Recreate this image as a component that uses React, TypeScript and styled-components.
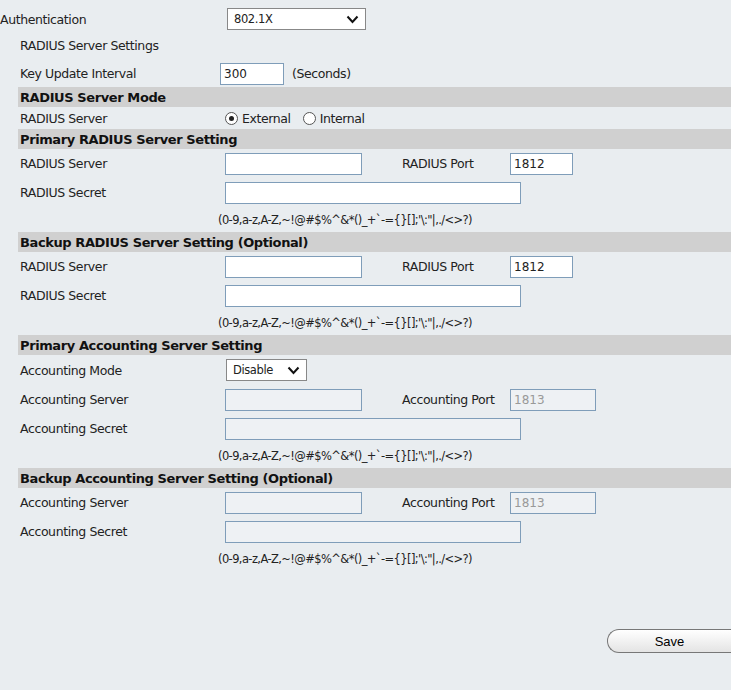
import React from 'react';
import styled, {createGlobalStyle} from 'styled-components';

const Global = createGlobalStyle`
  body { margin: 0; background: #fff; font-family: 'DejaVu Sans', Verdana, sans-serif; }
`;

const HINT = `(0-9,a-z,A-Z,~!@#$%^&*()_+\`-={}[];'\\:"|,./<>?)`;

const Page = styled.div`
  width: 731px;
  height: 690px;
  background: #e9edf0;
  font-size: 12.5px;
  color: #222;
  padding-top: 8px;
  box-sizing: border-box;
  letter-spacing: -0.4px;
`;

const Row = styled.div<{$h?: number; $indent?: number}>`
  display: flex;
  align-items: center;
  height: ${p => p.$h ?? 28}px;
  padding-left: ${p => p.$indent ?? 20}px;
`;

const Label = styled.div<{$w?: number}>`
  width: ${p => p.$w ?? 205}px;
  flex: none;
`;

const Header = styled.div`
  margin-left: 18px;
  height: 20px;
  background: #d0d0d0;
  font-weight: bold;
  font-size: 13px;
  padding-left: 2px;
  display: flex;
  align-items: center;
  color: #111;
`;

const Input = styled.input<{$w: number}>`
  width: ${p => p.$w}px;
  height: 22px;
  box-sizing: border-box;
  border: 1px solid #7f9db9;
  background: ${p => (p.disabled ? '#eef1f4' : '#fff')};
  color: #999;
  font: inherit;
  font-size: 12px;
  padding: 0 3px;
  &:not(:disabled) { color: #222; }
`;

const Select = styled.div<{$w: number}>`
  width: ${p => p.$w}px;
  height: 22px;
  box-sizing: border-box;
  border: 1px solid #888;
  background: #fff;
  display: flex;
  align-items: center;
  justify-content: space-between;
  padding: 0 6px;
  font-size: 11.5px;
`;

const PortLabel = styled.div`
  width: 148px;
  box-sizing: border-box;
  padding-left: 40px;
  flex: none;
`;

const Hint = styled.div`
  padding-left: 218px;
  height: 25px;
  display: flex;
  align-items: center;
  font-size: 11.5px;
  letter-spacing: -0.6px;
`;

const Radio = styled.span<{$on?: boolean}>`
  width: 11px;
  height: 11px;
  border: 1px solid #555;
  border-radius: 50%;
  display: inline-flex;
  align-items: center;
  justify-content: center;
  margin-right: 4px;
  background: #fff;
  &::after { content: ''; width: 5px; height: 5px; border-radius: 50%; background: ${p => (p.$on ? '#222' : 'transparent')}; }
`;

const Gap = styled.span`
  width: 12px;
`;

const Footer = styled.div`
  display: flex;
  justify-content: flex-end;
  padding-top: 58px;
`;

const SaveBtn = styled.button`
  width: 124px;
  height: 24px;
  border: 1px solid #777;
  border-right: none;
  border-radius: 12px 0 0 12px;
  background: linear-gradient(#fff, #e4e4e4);
  font-family: 'Liberation Sans', Arial, sans-serif;
  font-size: 13px;
`;

const Chevron = () => (
  <svg width="13" height="9" viewBox="0 0 13 9">
    <path d="M1.5 1.5 L6.5 7 L11.5 1.5" stroke="#111" strokeWidth="2" fill="none" />
  </svg>
);

const Server = ({name, port, portLbl, dis}: {name: string; port: string; portLbl: string; dis?: boolean}) => (
  <>
    <Row $h={29}>
      <Label>{name} Server</Label>
      <Input $w={137} disabled={dis} />
      <PortLabel>{portLbl}</PortLabel>
      <Input $w={dis ? 86 : 63} defaultValue={port} disabled={dis} />
    </Row>
    <Row $h={29}>
      <Label>{name} Secret</Label>
      <Input $w={296} disabled={dis} />
    </Row>
    <Hint>{HINT}</Hint>
  </>
);

export default function App() {
  return (
    <Page>
      <Global />
      <Row $h={22} $indent={0}>
        <Label $w={227}>Authentication</Label>
        <Select $w={139}>802.1X<Chevron /></Select>
      </Row>
      <Row $h={30}>RADIUS Server Settings</Row>
      <Row $h={27}>
        <Label $w={200}>Key Update Interval</Label>
        <Input $w={64} defaultValue="300" />
        <span style={{marginLeft: 8}}>(Seconds)</span>
      </Row>
      <Header>RADIUS Server Mode</Header>
      <Row $h={22}>
        <Label>RADIUS Server</Label>
        <Radio $on />External<Gap /><Radio />Internal
      </Row>
      <Header>Primary RADIUS Server Setting</Header>
      <Server name="RADIUS" port="1812" portLbl="RADIUS Port" />
      <Header>Backup RADIUS Server Setting (Optional)</Header>
      <Server name="RADIUS" port="1812" portLbl="RADIUS Port" />
      <Header>Primary Accounting Server Setting</Header>
      <Row $h={30}>
        <Label $w={206}>Accounting Mode</Label>
        <Select $w={81}>Disable<Chevron /></Select>
      </Row>
      <Server name="Accounting" port="1813" portLbl="Accounting Port" dis />
      <Header>Backup Accounting Server Setting (Optional)</Header>
      <Server name="Accounting" port="1813" portLbl="Accounting Port" dis />
      <Footer><SaveBtn>Save</SaveBtn></Footer>
    </Page>
  );
}
